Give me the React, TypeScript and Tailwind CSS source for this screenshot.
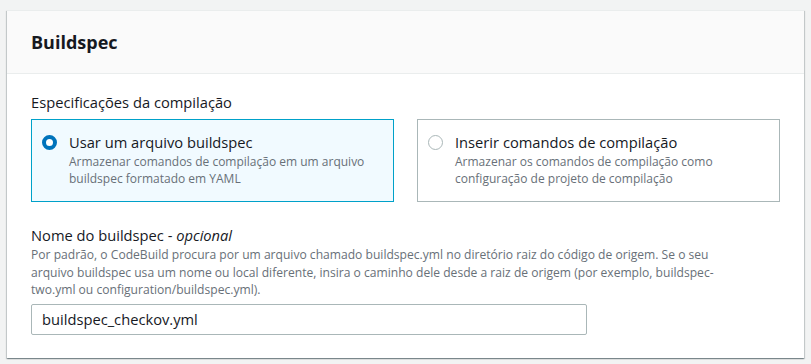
import { useState } from "react";

type Option = {
  id: string;
  title: string;
  lines: string[];
};

const options: Option[] = [
  {
    id: "file",
    title: "Usar um arquivo buildspec",
    lines: ["Armazenar comandos de compilação em um arquivo", "buildspec formatado em YAML"],
  },
  {
    id: "insert",
    title: "Inserir comandos de compilação",
    lines: ["Armazenar os comandos de compilação como", "configuração de projeto de compilação"],
  },
];

const RadioCard = ({ opt, selected, onSelect }: { opt: Option; selected: boolean; onSelect: () => void }) => (
  <div
    onClick={onSelect}
    className={`flex cursor-pointer gap-[12px] border pl-[10px] pr-3 pt-[11px] pb-[14px] ${
      selected ? "border-[#00a1c9] bg-[#f1faff]" : "border-[#aab7b8] bg-white"
    }`}
  >
    <span
      className={`mt-[4px] h-[15px] w-[15px] shrink-0 rounded-full bg-white ${
        selected ? "border-[4px] border-[#0073bb]" : "border border-[#aab7b8]"
      }`}
    />
    <div>
      <div className="text-[14.7px] leading-[22px] text-[#16191f]">{opt.title}</div>
      <div className="text-[12px] leading-[17px] text-[#687078]">
        {opt.lines.map((l) => (
          <div key={l}>{l}</div>
        ))}
      </div>
    </div>
  </div>
);

export default function App() {
  const [choice, setChoice] = useState("file");
  const [name, setName] = useState("buildspec_checkov.yml");

  return (
    <div
      className="min-h-[364px] bg-[#f2f3f3] px-[7px] pt-[10px]"
      style={{ fontFamily: '"Open Sans", "Noto Sans", Arial, sans-serif' }}
    >
      <div className="bg-white shadow-[0_1px_1px_0_rgba(0,28,36,0.3),1px_1px_1px_0_rgba(0,28,36,0.15),-1px_1px_1px_0_rgba(0,28,36,0.15)] border-t border-[#eaeded]">
        {/* Header */}
        <div className="border-b border-[#eaeded] bg-[#fafafa] px-[24px] py-[20px]">
          <h2 className="text-[18px] font-bold leading-[22px] text-[#16191f]">Buildspec</h2>
        </div>

        {/* Body */}
        <div className="px-[24px] pt-[17px] pb-[23px]">
          <div className="mb-[6px] text-[14.7px] leading-[22px] text-[#16191f]">Especificações da compilação</div>
          <div className="grid grid-cols-2 gap-[23px]">
            {options.map((o) => (
              <RadioCard key={o.id} opt={o} selected={choice === o.id} onSelect={() => setChoice(o.id)} />
            ))}
          </div>

          <div className="mt-[22px]">
            <div className="text-[14.7px] leading-[22px] text-[#16191f]">
              Nome do buildspec - <i>opcional</i>
            </div>
            <div className="text-[12.1px] leading-[17.5px] text-[#687078]">
              Por padrão, o CodeBuild procura por um arquivo chamado buildspec.yml no diretório raiz do código de origem. Se o seu
              <br />
              arquivo buildspec usa um nome ou local diferente, insira o caminho dele desde a raiz de origem (por exemplo, buildspec-
              <br />
              two.yml ou configuration/buildspec.yml).
            </div>
            <input
              value={name}
              onChange={(e) => setName(e.target.value)}
              className="mt-[5px] block h-[31px] w-[556px] rounded-[2px] border border-[#aab7b8] bg-white px-[10px] text-[14.7px] text-[#16191f] outline-none"
            />
          </div>
        </div>
      </div>
    </div>
  );
}
